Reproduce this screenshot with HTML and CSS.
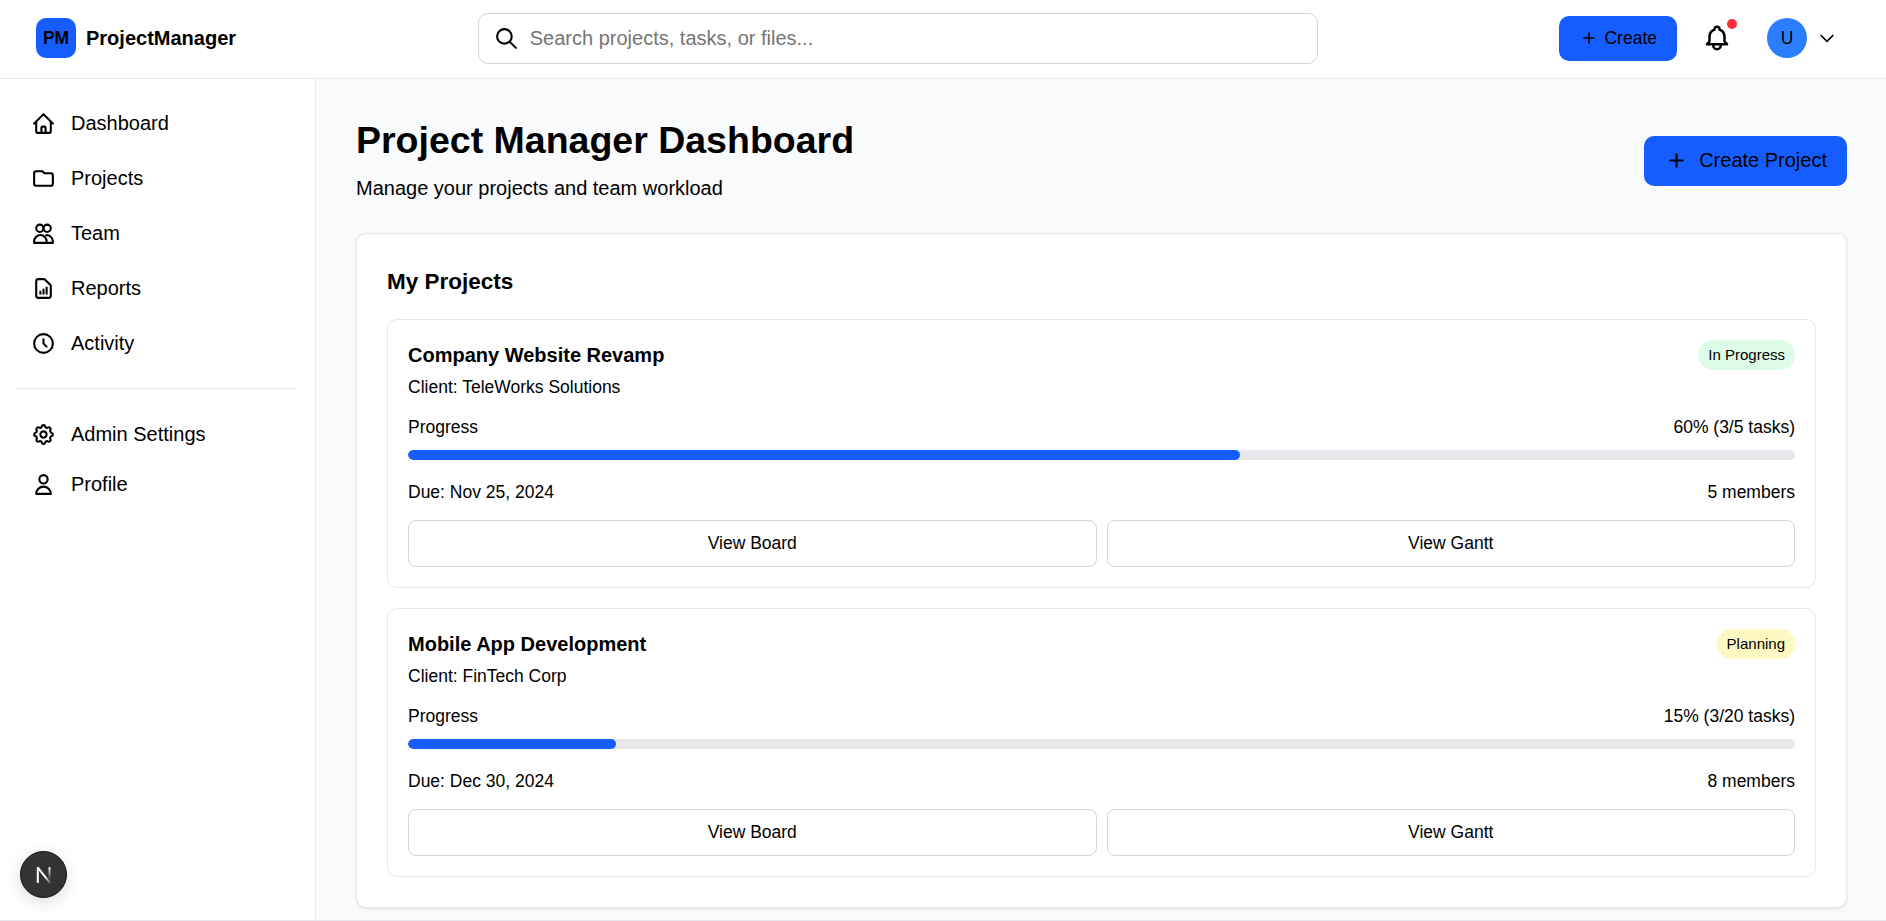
FILE: index.html
```html
<!DOCTYPE html>
<html lang="en">
<head>
    <meta charset="UTF-8">
    <meta name="viewport" content="width=device-width, initial-scale=1.0">
    <title>ProjectManager</title>
    <link rel="stylesheet" href="styles.css">
</head>
<body>
    <header class="topbar">
        <div class="brand">
            <div class="brand-mark">PM</div>
            <span class="brand-name">ProjectManager</span>
        </div>
        <div class="search-wrap">
            <div class="search">
                <svg class="search-icon" viewBox="0 0 24 24"><path d="M21 21l-6-6m2-5a7 7 0 11-14 0 7 7 0 0114 0z"/></svg>
                <input type="text" class="search-input" placeholder="Search projects, tasks, or files...">
            </div>
        </div>
        <div class="topbar-actions">
            <button class="btn-primary btn-small">
                <svg class="plus-icon" viewBox="0 0 24 24"><path d="M12 6v6m0 0v6m0-6h6m-6 0H6"/></svg>
                Create
            </button>
            <div class="bell">
                <svg viewBox="0 0 24 24"><path d="M15 17h5l-1.4-1.4A2 2 0 0 1 18 14.2V11a6 6 0 0 0-4-5.7V5a2 2 0 1 0-4 0v.3A6 6 0 0 0 6 11v3.2a2 2 0 0 1-.6 1.4L4 17h5m6 0v1a3 3 0 1 1-6 0v-1m6 0H9"/></svg>
                <span class="bell-dot"></span>
            </div>
            <div class="user">
                <div class="avatar">U</div>
                <svg class="chevron" viewBox="0 0 24 24"><path d="M19 9l-7 7-7-7"/></svg>
            </div>
        </div>
    </header>

    <div class="layout">
        <aside class="sidebar">
            <nav class="nav-group">
                <a class="nav-item"><svg viewBox="0 0 24 24"><path d="M3 12l2-2m0 0l7-7 7 7M5 10v10a1 1 0 001 1h3m10-11l2 2m-2-2v10a1 1 0 01-1 1h-3m-6 0a1 1 0 001-1v-4a1 1 0 011-1h2a1 1 0 011 1v4a1 1 0 001 1m-6 0h6"/></svg>Dashboard</a>
                <a class="nav-item"><svg viewBox="0 0 24 24"><path d="M3 7v10a2 2 0 002 2h14a2 2 0 002-2V9a2 2 0 00-2-2h-6l-2-2H5a2 2 0 00-2 2z"/></svg>Projects</a>
                <a class="nav-item"><svg viewBox="0 0 24 24"><circle cx="8.5" cy="7" r="3.5"/><circle cx="15.5" cy="7" r="3.5"/><path d="M3 21v-1.5a6 6 0 0 1 12 0V21z"/><path d="M14.5 13.6a6 6 0 0 1 6.5 5.9V21h-6"/></svg>Team</a>
                <a class="nav-item"><svg viewBox="0 0 24 24"><path d="M9 17v-2m3 2v-4m3 4v-6m2 10H7a2 2 0 01-2-2V5a2 2 0 012-2h5.586a1 1 0 01.707.293l5.414 5.414a1 1 0 01.293.707V19a2 2 0 01-2 2z"/></svg>Reports</a>
                <a class="nav-item"><svg viewBox="0 0 24 24"><path d="M12 8v4l3 3m6-3a9 9 0 11-18 0 9 9 0 0118 0z"/></svg>Activity</a>
            </nav>
            <div class="nav-divider"></div>
            <nav class="nav-group nav-group-tight">
                <a class="nav-item"><svg viewBox="0 0 24 24"><path d="M10.325 4.317c.426-1.756 2.924-1.756 3.35 0a1.724 1.724 0 002.573 1.066c1.543-.94 3.31.826 2.37 2.37a1.724 1.724 0 001.065 2.572c1.756.426 1.756 2.924 0 3.35a1.724 1.724 0 00-1.066 2.573c.94 1.543-.826 3.31-2.37 2.37a1.724 1.724 0 00-2.572 1.065c-.426 1.756-2.924 1.756-3.35 0a1.724 1.724 0 00-2.573-1.066c-1.543.94-3.31-.826-2.37-2.37a1.724 1.724 0 00-1.065-2.572c-1.756-.426-1.756-2.924 0-3.35a1.724 1.724 0 001.066-2.573c-.94-1.543.826-3.31 2.37-2.37.996.608 2.296.07 2.572-1.065z"/><path d="M15 12a3 3 0 11-6 0 3 3 0 016 0z"/></svg>Admin Settings</a>
                <a class="nav-item"><svg viewBox="0 0 24 24"><path d="M16 7a4 4 0 11-8 0 4 4 0 018 0zM12 14a7 7 0 00-7 7h14a7 7 0 00-7-7z"/></svg>Profile</a>
            </nav>
            <div class="dev-badge">
                <svg class="dev-logo" viewBox="0 0 16 16">
                    <defs>
                        <linearGradient id="devFade" gradientUnits="userSpaceOnUse" x1="2" y1="1" x2="14" y2="16">
                            <stop offset="0.6" stop-color="#fff"/>
                            <stop offset="1" stop-color="#fff" stop-opacity="0"/>
                        </linearGradient>
                        <linearGradient id="devFadeRight" x1="0" y1="0" x2="0" y2="1">
                            <stop offset="0" stop-color="#fff"/>
                            <stop offset="0.9" stop-color="#fff" stop-opacity="0.1"/>
                        </linearGradient>
                    </defs>
                    <path class="dev-stem" d="M2.5 15V1"/>
                    <path class="dev-diag" d="M2.5 1.5L14.5 16.5"/>
                    <rect class="dev-right" x="12" y="1" width="1.8" height="11"/>
                </svg>
            </div>
        </aside>

        <main class="content">
            <div class="page-head">
                <div>
                    <h1 class="page-title">Project Manager Dashboard</h1>
                    <p class="page-sub">Manage your projects and team workload</p>
                </div>
                <button class="btn-primary btn-large">
                    <svg class="plus-icon" viewBox="0 0 24 24"><path d="M12 6v6m0 0v6m0-6h6m-6 0H6"/></svg>
                    Create Project
                </button>
            </div>

            <section class="panel">
                <h2 class="panel-title">My Projects</h2>

                <article class="project">
                    <div class="row">
                        <h3 class="project-name">Company Website Revamp</h3>
                        <span class="badge badge-green">In Progress</span>
                    </div>
                    <p class="client">Client: TeleWorks Solutions</p>
                    <div class="row row-progress">
                        <span>Progress</span>
                        <span>60% (3/5 tasks)</span>
                    </div>
                    <div class="bar"><div class="bar-fill" style="width: 60%"></div></div>
                    <div class="row row-meta">
                        <span>Due: Nov 25, 2024</span>
                        <span>5 members</span>
                    </div>
                    <div class="project-actions">
                        <button class="btn-outline">View Board</button>
                        <button class="btn-outline">View Gantt</button>
                    </div>
                </article>

                <article class="project">
                    <div class="row">
                        <h3 class="project-name">Mobile App Development</h3>
                        <span class="badge badge-yellow">Planning</span>
                    </div>
                    <p class="client">Client: FinTech Corp</p>
                    <div class="row row-progress">
                        <span>Progress</span>
                        <span>15% (3/20 tasks)</span>
                    </div>
                    <div class="bar"><div class="bar-fill" style="width: 15%"></div></div>
                    <div class="row row-meta">
                        <span>Due: Dec 30, 2024</span>
                        <span>8 members</span>
                    </div>
                    <div class="project-actions">
                        <button class="btn-outline">View Board</button>
                        <button class="btn-outline">View Gantt</button>
                    </div>
                </article>
            </section>
        </main>
    </div>
</body>
</html>
```

FILE: styles.css
```css
* {
    box-sizing: border-box;
}

html, body {
    height: 100%;
    margin: 0;
}

body {
    display: flex;
    flex-direction: column;
    overflow: hidden;
    font-family: "Liberation Sans", Arial, sans-serif;
    font-size: 20px;
    line-height: 30px;
    color: #000;
    background-color: #fff;
    border-bottom: 1px solid #e5e7eb;
}

svg {
    fill: none;
    stroke: currentColor;
    stroke-width: 2;
    stroke-linecap: round;
    stroke-linejoin: round;
    flex-shrink: 0;
}

button {
    font-family: inherit;
    color: #000;
    cursor: pointer;
}

/* top bar */
.topbar {
    display: flex;
    align-items: center;
    height: 79px;
    padding: 0 49px 2px 36px;
    background-color: #fff;
    border-bottom: 1px solid #e5e7eb;
    flex-shrink: 0;
}

.brand {
    display: flex;
    align-items: center;
    gap: 10px;
}

.brand-mark {
    display: flex;
    align-items: center;
    justify-content: center;
    width: 40px;
    height: 40px;
    font-size: 17.5px;
    font-weight: bold;
    background-color: #165dff;
    border-radius: 10px;
}

.brand-name {
    font-weight: bold;
}

.search-wrap {
    display: flex;
    justify-content: center;
    flex: 1;
}

.search {
    display: flex;
    align-items: center;
    gap: 11px;
    width: 840px;
    height: 51px;
    padding: 0 15px;
    border: 1px solid #d1d5db;
    border-radius: 10px;
}

.search-icon {
    width: 25px;
    height: 25px;
}

.search-input {
    flex: 1;
    border: none;
    outline: none;
    padding: 0;
    font-family: inherit;
    font-size: 20px;
    color: #000;
}

.search-input::placeholder {
    color: #757575;
}

.topbar-actions {
    display: flex;
    align-items: center;
}

.btn-primary {
    display: flex;
    align-items: center;
    background-color: #165dff;
    border: none;
    border-radius: 10px;
}

.btn-small {
    gap: 5px;
    height: 45px;
    padding: 0 20px;
    font-size: 17.5px;
}

.btn-small .plus-icon {
    width: 20px;
    height: 20px;
}

.btn-large {
    gap: 10px;
    height: 50px;
    padding: 0 20px;
    font-size: 20px;
}

.btn-large .plus-icon {
    width: 25px;
    height: 25px;
}

.bell {
    position: relative;
    display: flex;
    margin-left: 25px;
    width: 30px;
    height: 30px;
}

.bell svg {
    width: 30px;
    height: 30px;
}

.bell-dot {
    position: absolute;
    top: -4px;
    right: -5px;
    width: 10px;
    height: 10px;
    background-color: #fb2c36;
    border-radius: 50%;
}

.user {
    display: flex;
    align-items: center;
    gap: 10px;
    margin-left: 35px;
}

.avatar {
    display: flex;
    align-items: center;
    justify-content: center;
    width: 40px;
    height: 40px;
    font-size: 17.5px;
    background-color: #2b7fff;
    border-radius: 50%;
}

.chevron {
    width: 20px;
    height: 20px;
}

/* layout */
.layout {
    display: flex;
    flex: 1;
    min-height: 0;
}

.sidebar {
    position: relative;
    width: 316px;
    padding: 19px 20px 0 16px;
    background-color: #fff;
    border-right: 1px solid #e5e7eb;
    flex-shrink: 0;
}

.nav-group {
    display: flex;
    flex-direction: column;
    gap: 5px;
}

.nav-group-tight {
    gap: 0;
}

.nav-item {
    display: flex;
    align-items: center;
    gap: 15px;
    height: 50px;
    padding: 0 15px;
}

.nav-item svg {
    width: 25px;
    height: 25px;
}

.nav-divider {
    height: 1px;
    margin: 20px 0;
    background-color: #e5e7eb;
}

.dev-badge {
    position: absolute;
    left: 20px;
    bottom: 22px;
    display: flex;
    align-items: center;
    justify-content: center;
    width: 47px;
    height: 47px;
    background-color: #333;
    border: 1px solid #111;
    border-radius: 50%;
    box-shadow: 0 4px 16px rgba(0, 0, 0, 0.14);
}

.dev-logo {
    width: 18px;
    height: 18px;
}

.dev-stem {
    stroke: #fff;
    stroke-width: 1.8;
    stroke-linecap: butt;
}

.dev-diag {
    stroke: url(#devFade);
    stroke-width: 1.8;
    stroke-linecap: butt;
}

.dev-right {
    stroke: none;
    fill: url(#devFadeRight);
}

/* main */
.content {
    flex: 1;
    min-width: 0;
    padding: 39px 39px 40px 40px;
    background-color: #f9fafb;
    overflow: hidden;
}

.page-head {
    display: flex;
    align-items: center;
    justify-content: space-between;
    margin-bottom: 30px;
}

.page-title {
    margin: 0;
    font-size: 37.5px;
    line-height: 45px;
}

.page-sub {
    margin: 10px 0 0;
}

.panel {
    padding: 30px;
    background-color: #fff;
    border: 1px solid #e5e7eb;
    border-radius: 10px;
    box-shadow: 0 1px 3px rgba(0, 0, 0, 0.1);
}

.panel-title {
    margin: 0 0 20px;
    font-size: 22.5px;
    line-height: 35px;
}

.project {
    padding: 20px;
    border: 1px solid #e5e7eb;
    border-radius: 10px;
    font-size: 17.5px;
    line-height: 25px;
}

.project + .project {
    margin-top: 20px;
}

.row {
    display: flex;
    align-items: center;
    justify-content: space-between;
}

.project-name {
    margin: 0;
    font-size: 20px;
    line-height: 30px;
}

.badge {
    padding: 5px 10px;
    font-size: 15px;
    line-height: 20px;
    border-radius: 15px;
}

.badge-green {
    background-color: #dcfce7;
}

.badge-yellow {
    background-color: #fef9c2;
}

.client {
    margin: 5px 0 0;
}

.row-progress {
    margin-top: 15px;
}

.bar {
    height: 10px;
    margin-top: 10px;
    background-color: #e5e7eb;
    border-radius: 5px;
    overflow: hidden;
}

.bar-fill {
    height: 100%;
    background-color: #165dff;
    border-radius: 5px;
}

.row-meta {
    margin-top: 20px;
}

.project-actions {
    display: flex;
    gap: 10px;
    margin-top: 15px;
}

.btn-outline {
    flex: 1;
    height: 47px;
    font-size: 17.5px;
    background-color: #fff;
    border: 1px solid #d1d5db;
    border-radius: 8px;
}
```
